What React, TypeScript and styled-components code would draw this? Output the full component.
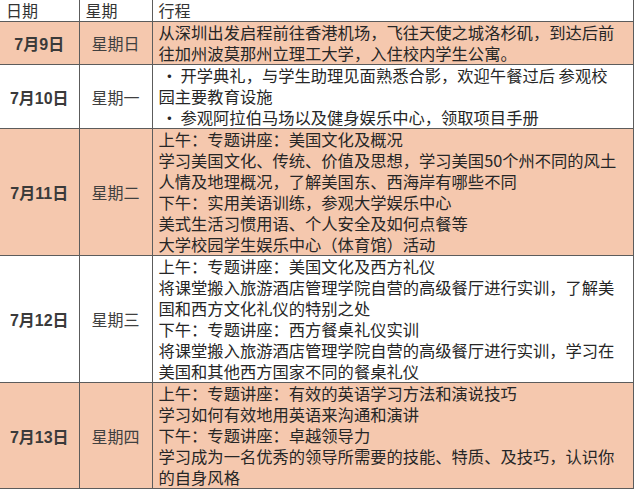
import styled, { createGlobalStyle } from "styled-components";

const GlobalStyle = createGlobalStyle`
  html, body {
    margin: 0;
    padding: 0;
    background: #ffffff;
  }
  body {
    font-family: "Noto Sans CJK SC", "Noto Sans", sans-serif;
    color: #2b2b2b;
  }
`;

interface DayType {
  date: string;
  week: string;
  lines: string[];
  shaded: boolean;
}

const days: DayType[] = [
  {
    date: "7月9日",
    week: "星期日",
    shaded: true,
    lines: [
      "从深圳出发启程前往香港机场，飞往天使之城洛杉矶，到达后前",
      "往加州波莫那州立理工大学，入住校内学生公寓。",
    ],
  },
  {
    date: "7月10日",
    week: "星期一",
    shaded: false,
    lines: [
      "•开学典礼，与学生助理见面熟悉合影，欢迎午餐过后 参观校",
      "园主要教育设施",
      "•参观阿拉伯马场以及健身娱乐中心，领取项目手册",
    ],
  },
  {
    date: "7月11日",
    week: "星期二",
    shaded: true,
    lines: [
      "上午：专题讲座：美国文化及概况",
      "学习美国文化、传统、价值及思想，学习美国50个州不同的风土",
      "人情及地理概况，了解美国东、西海岸有哪些不同",
      "下午：实用美语训练，参观大学娱乐中心",
      "美式生活习惯用语、个人安全及如何点餐等",
      "大学校园学生娱乐中心（体育馆）活动",
    ],
  },
  {
    date: "7月12日",
    week: "星期三",
    shaded: false,
    lines: [
      "上午：专题讲座：美国文化及西方礼仪",
      "将课堂搬入旅游酒店管理学院自营的高级餐厅进行实训，了解美",
      "国和西方文化礼仪的特别之处",
      "下午：专题讲座：西方餐桌礼仪实训",
      "将课堂搬入旅游酒店管理学院自营的高级餐厅进行实训，学习在",
      "美国和其他西方国家不同的餐桌礼仪",
    ],
  },
  {
    date: "7月13日",
    week: "星期四",
    shaded: true,
    lines: [
      "上午：专题讲座：有效的英语学习方法和演说技巧",
      "学习如何有效地用英语来沟通和演讲",
      "下午：专题讲座：卓越领导力",
      "学习成为一名优秀的领导所需要的技能、特质、及技巧，认识你",
      "的自身风格",
    ],
  },
];

const App = () => {
  return (
    <>
      <GlobalStyle />
      <Schedule>
        <colgroup>
          <col style={{ width: 79 }} />
          <col style={{ width: 73 }} />
          <col />
        </colgroup>
        <thead>
          <tr>
            <HeadCell>日期</HeadCell>
            <HeadCell>星期</HeadCell>
            <HeadCell>行程</HeadCell>
          </tr>
        </thead>
        <tbody>
          {days.map((day) => (
            <DayRow key={day.date} $shaded={day.shaded}>
              <DateCell>{day.date}</DateCell>
              <WeekCell>{day.week}</WeekCell>
              <PlanCell>
                {day.lines.map((line, i) =>
                  line.startsWith("•") ? (
                    <Line key={i}>
                      <Bullet>•</Bullet>
                      {line.slice(1)}
                    </Line>
                  ) : (
                    <Line key={i}>{line}</Line>
                  )
                )}
              </PlanCell>
            </DayRow>
          ))}
        </tbody>
      </Schedule>
    </>
  );
};

export default App;

const Schedule = styled.table`
  width: 634px;
  border-collapse: collapse;
  table-layout: fixed;
  border-bottom: 1px solid #5c5c5c;
  td,
  th {
    border: 1px solid #5c5c5c;
    padding: 0;
  }
  tr > *:first-child {
    border-left: none;
  }
  thead th {
    border-top: none;
  }
`;

const HeadCell = styled.th`
  height: 21px;
  text-align: left;
  vertical-align: middle;
  font-weight: 400;
  font-size: 16px;
  line-height: 21px;
  padding: 0 0 0 6px !important;
  color: #333333;
  background: #ffffff;
`;

const DayRow = styled.tr<{ $shaded: boolean }>`
  background: ${(p) => (p.$shaded ? "#f5c8ae" : "#ffffff")};
`;

const DateCell = styled.td`
  text-align: center;
  vertical-align: middle;
  font-family: "Liberation Sans", "Noto Sans CJK SC", sans-serif;
  font-weight: 600;
  font-size: 16px;
  color: #3a3a3a;
`;

const WeekCell = styled.td`
  text-align: center;
  vertical-align: middle;
  font-size: 16px;
  color: #404040;
`;

const PlanCell = styled.td`
  padding: 0 0 0 6px !important;
  font-size: 16.3px;
  line-height: 21px;
  color: #262626;
`;

const Line = styled.div`
  white-space: nowrap;
  height: 21px;
`;

const Bullet = styled.span`
  display: inline-block;
  width: 22px;
  text-align: center;
`;
